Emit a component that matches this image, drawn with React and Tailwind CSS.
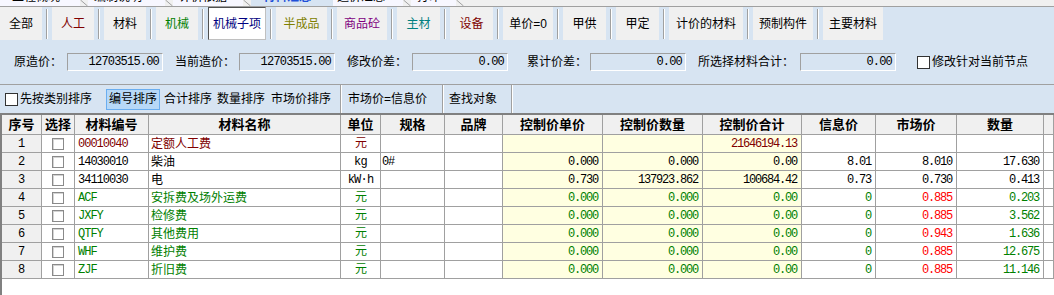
const SANS = "font-['Liberation_Sans','Noto_Sans_CJK_SC',sans-serif]";
const MONO = "font-['Liberation_Mono','Noto_Sans_CJK_SC',monospace]";

const tabs = [
  { label: '工程概况', w: 'w-[80px]', pl: 'pl-[12px]' },
  { label: '编制说明', w: 'w-[77px]', pl: 'pl-[6px]' },
  { label: '计价依据', w: 'w-[70px]', pl: 'pl-[6px]' },
  { label: '材料汇总', w: 'w-[82px]', pl: 'pl-[12px]', active: true },
  { label: '造价汇总', w: 'w-[70px]', pl: 'pl-[4px]' },
  { label: '打印', w: 'w-[45px]', pl: 'pl-[6px]' },
];

const buttons = [
  { label: '全部', w: 'w-[42px]', c: 'text-black' },
  { label: '人工', w: 'w-[42px]', c: 'text-[#800000]' },
  { label: '材料', w: 'w-[42px]', c: 'text-black' },
  { label: '机械', w: 'w-[42px]', c: 'text-[#008000]' },
  { label: '机械子项', w: 'w-[58px]', c: 'text-[#000080]', on: true },
  { label: '半成品', w: 'w-[51px]', c: 'text-[#808000]' },
  { label: '商品砼', w: 'w-[50px]', c: 'text-[#800080]' },
  { label: '主材', w: 'w-[43px]', c: 'text-[#008080]' },
  { label: '设备', w: 'w-[43px]', c: 'text-[#800000]' },
  { label: '单价=0', w: 'w-[50px]', c: 'text-black' },
  { label: '甲供', w: 'w-[43px]', c: 'text-black' },
  { label: '甲定', w: 'w-[43px]', c: 'text-black' },
  { label: '计价的材料', w: 'w-[74px]', c: 'text-black' },
  { label: '预制构件', w: 'w-[60px]', c: 'text-black' },
  { label: '主要材料', w: 'w-[60px]', c: 'text-black' },
];

const prices = [
  { label: '原造价：', ml: 'ml-[14px]', w: 'w-[53px]', value: '12703515.00' },
  { label: '当前造价：', ml: 'ml-[12px]', w: 'w-[64px]', value: '12703515.00' },
  { label: '修改价差：', ml: 'ml-[12px]', w: 'w-[65px]', value: '0.00' },
  { label: '累计价差：', ml: 'ml-[19px]', w: 'w-[63px]', value: '0.00' },
  { label: '所选择材料合计：', ml: 'ml-[12px]', w: 'w-[102px]', value: '0.00' },
];

const headers = ['序号', '选择', '材料编号', '材料名称', '单位', '规格', '品牌', '控制价单价', '控制价数量', '控制价合计', '信息价', '市场价', '数量', ''];

const RED = 'text-[#800000]';
const GREEN = 'text-[#008000]';

const rows = [
  { code: '00010040', name: '定额人工费', unit: '元', spec: '', up: '', qty: '', total: '21646194.13', info: '', market: '', num: '', c: RED },
  { code: '14030010', name: '柴油', unit: 'kg', spec: '0#', up: '0.000', qty: '0.000', total: '0.00', info: '8.01', market: '8.010', num: '17.630', c: 'text-black' },
  { code: '34110030', name: '电', unit: 'kW·h', spec: '', up: '0.730', qty: '137923.862', total: '100684.42', info: '0.73', market: '0.730', num: '0.413', c: 'text-black' },
  { code: 'ACF', name: '安拆费及场外运费', unit: '元', spec: '', up: '0.000', qty: '0.000', total: '0.00', info: '0', market: '0.885', num: '0.203', c: GREEN, red: true },
  { code: 'JXFY', name: '检修费', unit: '元', spec: '', up: '0.000', qty: '0.000', total: '0.00', info: '0', market: '0.885', num: '3.562', c: GREEN, red: true },
  { code: 'QTFY', name: '其他费用', unit: '元', spec: '', up: '0.000', qty: '0.000', total: '0.00', info: '0', market: '0.943', num: '1.636', c: GREEN, red: true },
  { code: 'WHF', name: '维护费', unit: '元', spec: '', up: '0.000', qty: '0.000', total: '0.00', info: '0', market: '0.885', num: '12.675', c: GREEN, red: true },
  { code: 'ZJF', name: '折旧费', unit: '元', spec: '', up: '0.000', qty: '0.000', total: '0.00', info: '0', market: '0.885', num: '11.146', c: GREEN, red: true },
];

const GRID = 'grid grid-cols-[40px_33px_74px_192px_40px_64px_58px_100px_100px_99px_74px_81px_87px_1fr]';
const CELL = 'h-[18px] border-r border-b border-[#a0a0a0] flex items-center overflow-hidden whitespace-nowrap';

function Sep({ h = 'h-[30px]' }) {
  return (
    <div className="w-[10px] flex justify-center items-center shrink-0">
      <div className={`${h} w-[2px] border-l border-[#a0a0a0] border-r border-r-white`} />
    </div>
  );
}

function Slant() {
  return (
    <svg width="8" height="6" viewBox="0 0 8 6" className="shrink-0">
      <path d="M0.5 0 L7.5 6" stroke="#a0a0a0" fill="none" />
    </svg>
  );
}

function Num({ v, className = '' }) {
  return (
    <div className={`${CELL} justify-end pr-[4px] ${MONO} text-[12px] tracking-[-1.2px] ${className}`}>{v}</div>
  );
}

export default function App() {
  return (
    <div className={`w-[1054px] h-[295px] overflow-hidden bg-[#d7e4f2] ${SANS} text-[12px] text-black`}>
      {/* tab strip, mostly cut off */}
      <div className="h-[7px] flex bg-[#f0f0f0] border-b border-[#a0a0a0] overflow-hidden">
        {tabs.map((t) => (
          <div key={t.label} className="flex shrink-0">
            <div className={`${t.w} ${t.pl} h-[6px] overflow-hidden ${t.active ? 'bg-[#d7e4f2] text-[#1e4fd8] font-bold' : 'bg-[#f7f7ff] text-black'}`}>
              <div className="-mt-[10px] leading-[14px] text-[12px]">{t.label}</div>
            </div>
            {!t.active && <Slant />}
          </div>
        ))}
      </div>

      {/* category toolbar */}
      <div className="h-[33px] flex">
        {buttons.map((b, i) => (
          <div key={b.label} className="flex shrink-0">
            {i > 0 && <Sep />}
            <div className={`${b.w} h-[33px] flex items-center justify-center ${b.c} ${b.on ? 'bg-white border border-[#505050] border-r-[#c0c0c0] border-b-[#c0c0c0]' : 'bg-[#f0f0f0]'}`}>
              {b.label}
            </div>
          </div>
        ))}
      </div>

      {/* price summary */}
      <div className="h-[44px] flex items-center">
        {prices.map((p) => (
          <div key={p.label} className={`flex items-center shrink-0 ${p.ml}`}>
            <span className={`${p.w} whitespace-nowrap shrink-0`}>{p.label}</span>
            <div className={`w-[96px] h-[18px] shrink-0 border border-[#a0a0a0] border-r-white border-b-white flex items-center justify-end pr-[3px] ${MONO} text-[12px] tracking-[-0.8px]`}>
              {p.value}
            </div>
          </div>
        ))}
        <div className="ml-[21px] flex items-center shrink-0">
          <div className="w-[13px] h-[13px] border border-[#333] bg-white" />
          <span className="ml-[2px] whitespace-nowrap">修改针对当前节点</span>
        </div>
      </div>

      {/* sort row */}
      <div className="h-[29px] border-t border-[#a0a0a0] flex items-center whitespace-nowrap">
        <div className="ml-[5px] w-[13px] h-[13px] border border-[#333] bg-white" />
        <span className="ml-[2px] w-[86px]">先按类别排序</span>
        <div className="h-[21px] px-[2px] flex items-center bg-[#b7d8f7] border border-[#6aaef0]">编号排序</div>
        <span className="ml-[4px]">合计排序</span>
        <span className="ml-[5px]">数量排序</span>
        <span className="ml-[6px]">市场价排序</span>
        <div className="ml-[5px] flex"><Sep h="h-[28px]" /></div>
        <span className="ml-[2px] w-[90px]">市场价=信息价</span>
        <Sep h="h-[28px]" />
        <span className="ml-[1px] w-[58px]">查找对象</span>
        <Sep h="h-[28px]" />
      </div>

      {/* material grid */}
      <div className="h-[182px] bg-white border-t-2 border-l-2 border-[#808080]">
        <div className={GRID}>
          {headers.map((h, i) => (
            <div key={i} className="h-[20px] border-r border-b border-[#a0a0a0] bg-[#f0f0f0] flex items-center justify-center font-bold text-[13px] whitespace-nowrap">
              {h}
            </div>
          ))}
        </div>
        {rows.map((r, i) => (
          <div key={r.code} className={`${GRID} ${r.c}`}>
            <div className={`${CELL} justify-center bg-[#f0f0f0] text-black ${MONO} text-[12px]`}>{i + 1}</div>
            <div className={`${CELL} justify-center`}>
              <div className="w-[12px] h-[12px] border border-[#8a8a8a] bg-white shadow-[inset_1px_1px_0_#d4d4d4]" />
            </div>
            <div className={`${CELL} pl-[3px] ${MONO} text-[12px] tracking-[-1px]`}>{r.code}</div>
            <div className={`${CELL} pl-[2px] text-[12px]`}>{r.name}</div>
            <div className={`${CELL} justify-center ${MONO} text-[12px] tracking-[-0.8px]`}>{r.unit}</div>
            <div className={`${CELL} pl-[1px] ${MONO} text-[12px] tracking-[-1.2px] text-black`}>{r.spec}</div>
            <div className={CELL} />
            <Num v={r.up} className="bg-[#ffffe1]" />
            <Num v={r.qty} className="bg-[#ffffe1]" />
            <Num v={r.total} className="bg-[#ffffe1]" />
            <Num v={r.info} />
            <Num v={r.market} className={r.red ? 'text-[#ff0000]' : ''} />
            <Num v={r.num} />
            <div className={CELL} />
          </div>
        ))}
      </div>
    </div>
  );
}
